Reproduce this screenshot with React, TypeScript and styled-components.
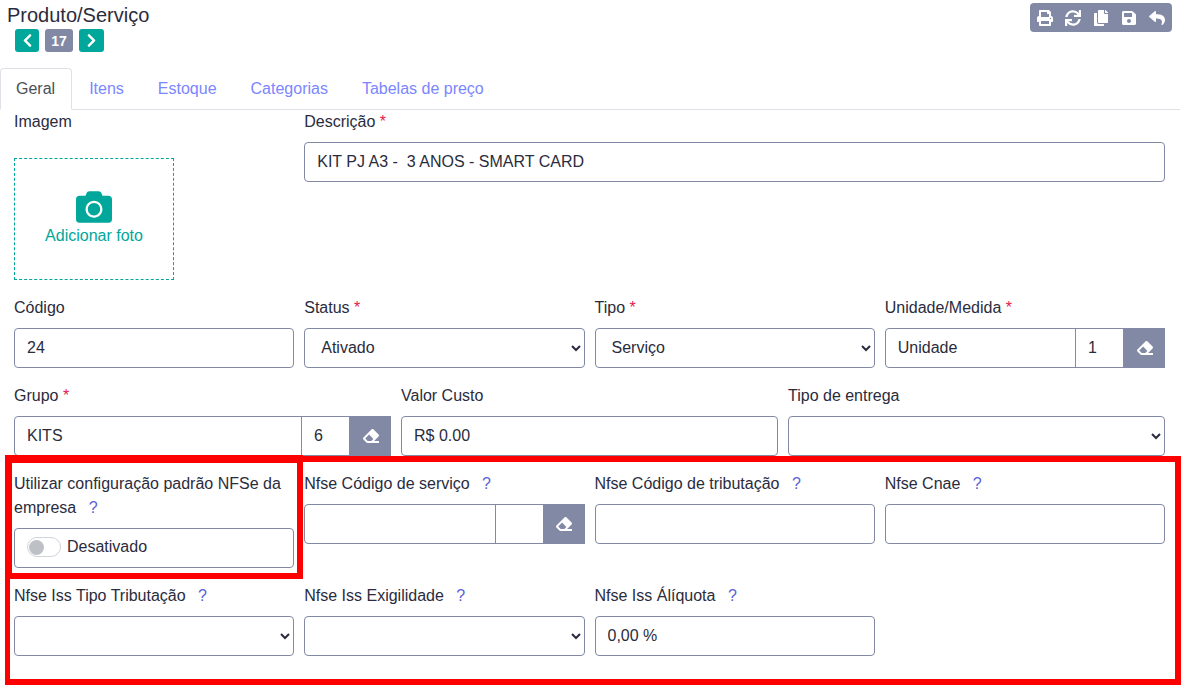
import React from 'react';
import styled, { createGlobalStyle } from 'styled-components';
import { FaCamera, FaChevronLeft, FaChevronRight, FaCopy, FaEraser, FaPrint, FaReply, FaSave, FaSync } from 'react-icons/fa';

const GlobalStyle = createGlobalStyle`
  html, body { margin: 0; padding: 0; background: #fff; }
  body {
    font-family: "Liberation Sans", Arial, sans-serif;
    font-size: 16px;
    color: #2a2c3d;
  }
`;

const Page = styled.div`
  position: relative;
  width: 1188px;
  height: 688px;
  overflow: hidden;
`;

const Header = styled.header`
  display: flex;
  justify-content: space-between;
  height: 68px;
  padding: 3px 16px 0 7px;
  box-sizing: border-box;
`;

const Title = styled.h1`
  margin: 0;
  font-size: 20px;
  font-weight: 400;
  line-height: 24px;
`;

const Pager = styled.div`
  display: flex;
  gap: 6px;
  margin: 2px 0 0 8px;
`;

const PagerButton = styled.div<{ $muted?: boolean; $w: number }>`
  display: flex;
  align-items: center;
  justify-content: center;
  width: ${p => p.$w}px;
  height: 23px;
  border-radius: 3px;
  color: #fff;
  font-size: 14px;
  font-weight: 700;
  background: ${p => (p.$muted ? '#8189a5' : '#00a79a')};
`;

const Toolbar = styled.div`
  display: flex;
  align-items: center;
  gap: 12px;
  height: 29px;
  padding: 0 7px;
  border-radius: 4px;
  color: #fff;
  font-size: 16px;
  background: #8189a5;
`;

const Tabs = styled.nav`
  display: flex;
  width: 1180px;
  height: 42px;
  box-sizing: border-box;
  border-bottom: 1px solid #dee2e6;
`;

const Tab = styled.div<{ $active?: boolean }>`
  height: 42px;
  box-sizing: border-box;
  padding: ${p => (p.$active ? '8px 16px 8px 15px' : '8px 16px')};
  line-height: 24px;
  color: ${p => (p.$active ? '#495057' : '#7b86ff')};
  border: 1px solid ${p => (p.$active ? '#dee2e6' : 'transparent')};
  border-bottom-color: ${p => (p.$active ? '#fff' : 'transparent')};
  border-radius: 4px 4px 0 0;
  background: ${p => (p.$active ? '#fff' : 'transparent')};
`;

const Form = styled.form`
  display: flex;
  flex-direction: column;
  gap: 16px;
  padding: 0 23px 0 14px;
`;

const Row = styled.div<{ $cols: number }>`
  display: grid;
  grid-template-columns: repeat(${p => p.$cols}, minmax(0, 1fr));
  column-gap: 10px;
  align-items: start;
`;

const Field = styled.div<{ $span?: number }>`
  grid-column: span ${p => p.$span ?? 1};
  min-width: 0;
`;

const Label = styled.label`
  display: block;
  height: 32px;
  line-height: 24px;
`;

const WrapLabel = styled(Label)`
  height: auto;
  margin-bottom: 8px;
`;

const Required = styled.span`
  color: #e6194b;
`;

const Tip = styled.span`
  margin-left: 8px;
  color: #5b5fd6;
`;

const Input = styled.input`
  display: block;
  width: 100%;
  height: 40px;
  box-sizing: border-box;
  padding: 6px 12px;
  border: 1px solid #8189a5;
  border-radius: 4px;
  font: inherit;
  color: inherit;
  background: #fff;
  outline: none;
`;

const Select = styled.select`
  display: block;
  width: 100%;
  height: 40px;
  box-sizing: border-box;
  padding: 5px 12px 7px;
  border: 1px solid #8189a5;
  border-radius: 4px;
  font: inherit;
  color: inherit;
  background: #fff;
`;

const Group = styled.div`
  display: flex;
  height: 40px;
`;

const GroupMain = styled(Input)`
  flex: 1;
  min-width: 0;
  border-radius: 4px 0 0 4px;
`;

const GroupCode = styled(Input)`
  flex: none;
  width: 49px;
  margin-left: -1px;
  border-radius: 0;
`;

const EraseButton = styled.div`
  flex: none;
  display: flex;
  align-items: center;
  justify-content: center;
  width: 41px;
  color: #fff;
  font-size: 16px;
  background: #8189a5;
`;

const ImageColumn = styled.div`
  grid-column: span 1;
  height: 170px;
`;

const ImageLabel = styled(Label)`
  height: 48px;
`;

const PhotoBox = styled.div`
  display: flex;
  flex-direction: column;
  align-items: center;
  justify-content: center;
  width: 160px;
  height: 122px;
  box-sizing: border-box;
  padding-bottom: 2px;
  border: 1px dashed #00a79a;
  color: #00a79a;
  line-height: 24px;
`;

const PhotoIcon = styled(FaCamera)`
  margin: 1px 0 -1px;
`;

const SwitchBox = styled.div`
  display: flex;
  align-items: center;
  gap: 6px;
  height: 40px;
  box-sizing: border-box;
  padding: 0 12px 3px;
  border: 1px solid #8189a5;
  border-radius: 4px;
`;

const SwitchTrack = styled.div`
  display: flex;
  align-items: center;
  width: 34px;
  height: 20px;
  box-sizing: border-box;
  padding: 2px 0 0 1px;
  border: 1px solid #ced4da;
  border-radius: 10px;
`;

const SwitchKnob = styled.div`
  width: 15px;
  height: 15px;
  border-radius: 50%;
  background: #bdc1c6;
`;

// marcações vermelhas por cima do print
const Highlight = styled.div<{ $x: number; $y: number; $w: number; $h: number; $b: string }>`
  position: absolute;
  left: ${p => p.$x}px;
  top: ${p => p.$y}px;
  width: ${p => p.$w}px;
  height: ${p => p.$h}px;
  box-sizing: border-box;
  border-style: solid;
  border-color: #ff0000;
  border-width: ${p => p.$b};
  pointer-events: none;
`;

const Req = () => <Required> *</Required>;

const Eraser = () => (
  <EraseButton>
    <FaEraser />
  </EraseButton>
);

export default function App() {
  return (
    <Page>
      <GlobalStyle />
      <Header>
        <div>
          <Title>Produto/Serviço</Title>
          <Pager>
            <PagerButton $w={24}><FaChevronLeft size={15} /></PagerButton>
            <PagerButton $w={28} $muted>17</PagerButton>
            <PagerButton $w={25}><FaChevronRight size={15} /></PagerButton>
          </Pager>
        </div>
        <Toolbar>
          <FaPrint />
          <FaSync />
          <FaCopy />
          <FaSave />
          <FaReply />
        </Toolbar>
      </Header>

      <Tabs>
        <Tab $active>Geral</Tab>
        <Tab>Itens</Tab>
        <Tab>Estoque</Tab>
        <Tab>Categorias</Tab>
        <Tab>Tabelas de preço</Tab>
      </Tabs>

      <Form>
        <Row $cols={4}>
          <ImageColumn>
            <ImageLabel>Imagem</ImageLabel>
            <PhotoBox>
              <PhotoIcon size={36} />
              Adicionar foto
            </PhotoBox>
          </ImageColumn>
          <Field $span={3}>
            <Label>Descrição<Req /></Label>
            <Input readOnly value="KIT PJ A3 -  3 ANOS - SMART CARD" />
          </Field>
        </Row>

        <Row $cols={4}>
          <Field>
            <Label>Código</Label>
            <Input readOnly value="24" />
          </Field>
          <Field>
            <Label>Status<Req /></Label>
            <Select defaultValue="Ativado"><option>Ativado</option></Select>
          </Field>
          <Field>
            <Label>Tipo<Req /></Label>
            <Select defaultValue="Serviço"><option>Serviço</option></Select>
          </Field>
          <Field>
            <Label>Unidade/Medida<Req /></Label>
            <Group>
              <GroupMain readOnly value="Unidade" />
              <GroupCode readOnly value="1" />
              <Eraser />
            </Group>
          </Field>
        </Row>

        <Row $cols={3}>
          <Field>
            <Label>Grupo<Req /></Label>
            <Group>
              <GroupMain readOnly value="KITS" />
              <GroupCode readOnly value="6" />
              <Eraser />
            </Group>
          </Field>
          <Field>
            <Label>Valor Custo</Label>
            <Input readOnly value="R$ 0.00" />
          </Field>
          <Field>
            <Label>Tipo de entrega</Label>
            <Select><option></option></Select>
          </Field>
        </Row>

        <Row $cols={4}>
          <Field>
            <WrapLabel>Utilizar configuração padrão NFSe da empresa <Tip>?</Tip></WrapLabel>
            <SwitchBox>
              <SwitchTrack><SwitchKnob /></SwitchTrack>
              Desativado
            </SwitchBox>
          </Field>
          <Field>
            <Label>Nfse Código de serviço <Tip>?</Tip></Label>
            <Group>
              <GroupMain readOnly />
              <GroupCode readOnly />
              <Eraser />
            </Group>
          </Field>
          <Field>
            <Label>Nfse Código de tributação <Tip>?</Tip></Label>
            <Input readOnly />
          </Field>
          <Field>
            <Label>Nfse Cnae <Tip>?</Tip></Label>
            <Input readOnly />
          </Field>
        </Row>

        <Row $cols={4}>
          <Field>
            <Label>Nfse Iss Tipo Tributação <Tip>?</Tip></Label>
            <Select><option></option></Select>
          </Field>
          <Field>
            <Label>Nfse Iss Exigilidade <Tip>?</Tip></Label>
            <Select><option></option></Select>
          </Field>
          <Field>
            <Label>Nfse Iss Álíquota <Tip>?</Tip></Label>
            <Input readOnly value="0,00 %" />
          </Field>
        </Row>
      </Form>

      <Highlight $x={5} $y={456} $w={1176} $h={229} $b="6px 6px 6px 5px" />
      <Highlight $x={5} $y={455} $w={298} $h={124} $b="8px 6px 6px 7px" />
    </Page>
  );
}
